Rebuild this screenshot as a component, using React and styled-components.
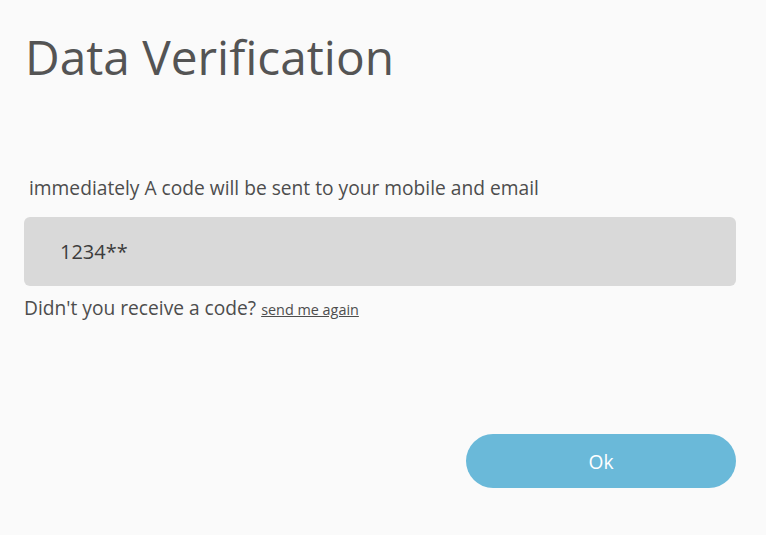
import React from "react";
import styled, { createGlobalStyle } from "styled-components";

const Global = createGlobalStyle`
  html, body { margin: 0; padding: 0; background: #fafafa; }
  body { font-family: "Open Sans", "Noto Sans", sans-serif; }
  #root { min-height: 100vh; }
`;

const Page = styled.div`
  box-sizing: border-box;
  width: 766px;
  min-height: 535px;
  padding: 24px 30px 0 24px;
  display: flex;
  flex-direction: column;
  background: #fafafa;
`;

const Title = styled.h1`
  margin: 0;
  padding-left: 1px;
  font-size: 47.8px;
  font-weight: 400;
  line-height: 66px;
  color: #545454;
`;

const Lead = styled.p`
  margin: 86px 0 0 5px;
  font-size: 19.2px;
  line-height: 24px;
  color: #4d4d4d;
`;

const CodeField = styled.input`
  box-sizing: border-box;
  margin-top: 17px;
  width: 712px;
  height: 69px;
  border: none;
  border-radius: 6px;
  background: #d9d9d9;
  padding: 0 0 0 36px;
  font-family: inherit;
  font-size: 20px;
  color: #3c3c3c;
  outline: none;
`;

const Resend = styled.p`
  margin: 8px 0 0;
  font-size: 19.2px;
  line-height: 28px;
  color: #4d4d4d;
`;

const ResendLink = styled.a`
  font-size: 14.4px;
  color: #4d4d4d;
  text-decoration: underline;
  cursor: pointer;
`;

const Actions = styled.div`
  display: flex;
  justify-content: flex-end;
  width: 712px;
  margin-top: 110px;
`;

const OkButton = styled.button`
  width: 270px;
  height: 54px;
  border: none;
  border-radius: 27px;
  background: #6ab9d9;
  color: #ffffff;
  font-family: inherit;
  font-size: 19.2px;
  cursor: pointer;
`;

export default function App() {
  return (
    <>
      <Global />
      <Page>
        <Title>Data Verification</Title>
        <Lead>immediately A code will be sent to your mobile and email</Lead>
        <CodeField defaultValue="1234**" />
        <Resend>
          Didn't you receive a code? <ResendLink>send me again</ResendLink>
        </Resend>
        <Actions>
          <OkButton>Ok</OkButton>
        </Actions>
      </Page>
    </>
  );
}
